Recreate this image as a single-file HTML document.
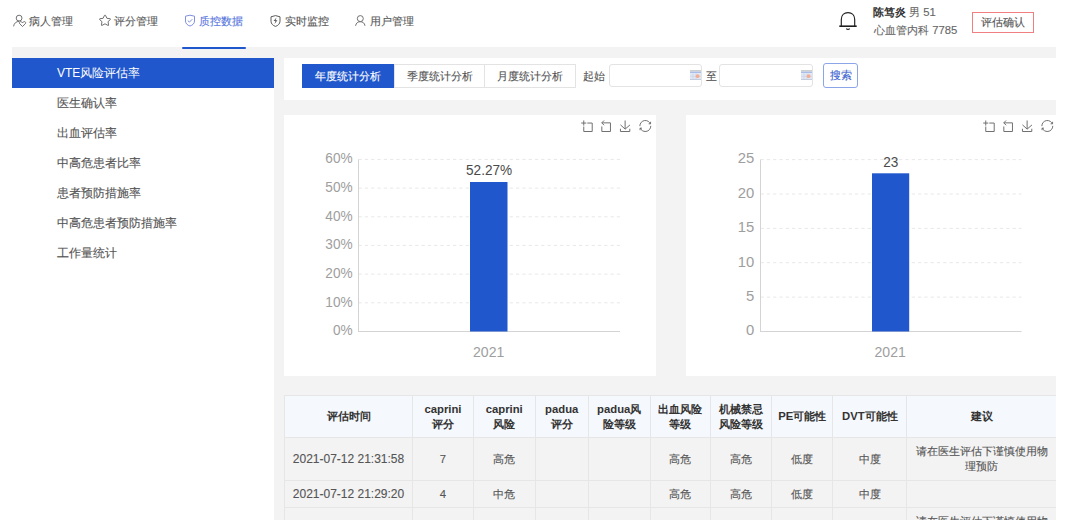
<!DOCTYPE html>
<html><head><meta charset="utf-8">
<style>
*{margin:0;padding:0;box-sizing:border-box}
html,body{width:1080px;height:520px;overflow:hidden;background:#fff}
body{position:relative;font-family:"Liberation Sans",sans-serif;font-size:12px;color:#555;-webkit-text-stroke:0.12px currentColor}
svg text{-webkit-text-stroke:0}
.si.on,th,b{-webkit-text-stroke:0}
.a{position:absolute}
.t{position:absolute;white-space:nowrap;line-height:14px;font-size:11.3px}
.nav{color:#5a5a5a}
.ic{position:absolute;overflow:visible}
#main{position:absolute;left:12px;top:47px;width:1044px;height:473px;background:#f3f3f3;overflow:hidden}
#side{position:absolute;left:0;top:11px;width:262px;height:470px;background:#fff}
.si{position:absolute;left:0;width:262px;height:30px;line-height:30px;padding-left:45px;color:#555;white-space:nowrap}
.si.on{background:#2157cc;color:#fff}
#tool{position:absolute;left:272px;top:11px;width:800px;height:42px;background:#fff}
.tab{position:absolute;font-size:11.3px;top:6px;height:24px;line-height:23px;text-align:center;border:1px solid #e3e3e3;color:#555;background:#fff}
.tab.on{background:#2157cc;color:#fff;border-color:#2157cc}
.inp{position:absolute;top:6px;height:23px;width:93px;border:1px solid #e3e3e3;border-radius:3px;background:#fff}
.panel{position:absolute;top:68px;width:372px;height:261px;background:#fff}
table{position:absolute;left:272px;top:348px;width:772.5px;border-collapse:collapse;table-layout:fixed}
td,th{border:1px solid #e6e6e6;text-align:center;font-size:11.3px}
th{background:#f5f8fc;color:#333;font-weight:bold;height:42px;line-height:15px}
td{color:#555}
</style></head><body>

<!-- header nav -->
<svg class="ic" style="left:12px;top:14px" width="16" height="14" viewBox="0 0 16 14" fill="none" stroke="#707070" stroke-width="1">
  <circle cx="7.1" cy="4.1" r="2.9"/>
  <path d="M1.6 12.4 C2 9.2 4.2 7.4 7.2 7.4"/>
  <path d="M10.5 12.5 L7.9 10 C6.9 9 7.3 7.6 8.6 7.6 C9.5 7.6 10.2 8.2 10.5 8.8 C10.8 8.2 11.5 7.6 12.4 7.6 C13.7 7.6 14.1 9 13.1 10 Z" stroke-linejoin="round"/>
</svg>
<div class="t nav" style="left:28.8px;top:14px">病人管理</div>

<svg class="ic" style="left:98px;top:14px" width="14" height="13" viewBox="0 0 14 13" fill="none" stroke="#707070" stroke-width="1" stroke-linejoin="round">
  <path d="M6.5 1.3 Q7 0.6 7.5 1.3 L8.9 4.3 L12.1 4.7 Q12.9 4.9 12.4 5.5 L10 7.7 L10.6 10.9 Q10.7 11.7 10 11.4 L7 9.8 L4 11.4 Q3.3 11.7 3.4 10.9 L4 7.7 L1.6 5.5 Q1.1 4.9 1.9 4.7 L5.1 4.3 Z"/>
</svg>
<div class="t nav" style="left:114px;top:14px">评分管理</div>

<svg class="ic" style="left:184px;top:14px" width="12" height="13" viewBox="0 0 12 13" fill="none" stroke="#7f90e0" stroke-width="1" stroke-linejoin="round">
  <path d="M1.5 2.2 L6 1.2 L10.5 2.2 V7 C10.5 9.6 8.5 11.3 6 12 C3.5 11.3 1.5 9.6 1.5 7 Z"/>
  <path d="M3.8 6.6 L5.4 8.1 L8.3 5.2"/>
</svg>
<div class="t" style="left:199px;top:14px;color:#5877dd">质控数据</div>
<div class="a" style="left:182px;top:47.3px;width:64px;height:2.2px;border-radius:2px;background:#2157cc;z-index:5"></div>

<svg class="ic" style="left:269px;top:14px" width="13" height="13" viewBox="0 0 13 13" fill="none" stroke="#5a5a5a" stroke-width="1">
  <path d="M2 2.8 Q6.5 0.4 11 2.8 V7.2 C11 9.8 9 11.6 6.5 12.4 C4 11.6 2 9.8 2 7.2 Z" stroke-linejoin="round"/>
  <path d="M7.5 3.4 L4.5 7.1 H6.4 L5.5 10 L8.5 6.2 H6.6 Z" fill="#5a5a5a" stroke="none"/>
</svg>
<div class="t nav" style="left:284.6px;top:14px">实时监控</div>

<svg class="ic" style="left:354px;top:14px" width="13" height="13" viewBox="0 0 13 13" fill="none" stroke="#707070" stroke-width="1">
  <circle cx="6.3" cy="4.6" r="3"/>
  <path d="M1.6 11.8 C2 9 3.9 7.7 6.3 7.7 C8.7 7.7 10.6 9 11 11.8"/>
</svg>
<div class="t nav" style="left:369.8px;top:14px">用户管理</div>

<!-- header right -->
<svg class="ic" style="left:838px;top:11px" width="20" height="20" viewBox="0 0 20 20" fill="none" stroke="#1e1e1e" stroke-width="1.15">
  <path d="M3.3 15 V8.4 C3.3 4.3 6.2 1.7 10 1.7 C13.8 1.7 16.7 4.3 16.7 8.4 V15"/>
  <path d="M1.3 15.2 H18.7" stroke-width="1.6"/>
  <path d="M8.2 17.6 Q10 19.2 11.8 17.6" stroke-width="1.2"/>
</svg>
<div class="t" style="left:873px;top:5px;color:#333"><b>陈笃炎</b> <span style="color:#666">男 51</span></div>
<div class="t" style="left:874px;top:23px;color:#666">心血管内科 7785</div>
<div class="a" style="left:972px;top:11.5px;width:62px;height:21px;border:1px solid #f08080;color:#555;text-align:center;line-height:19px;font-size:11.3px">评估确认</div>

<div id="main">
  <div id="side">
    <div class="si on" style="top:0">VTE风险评估率</div>
    <div class="si" style="top:30px">医生确认率</div>
    <div class="si" style="top:60px">出血评估率</div>
    <div class="si" style="top:90px">中高危患者比率</div>
    <div class="si" style="top:120px">患者预防措施率</div>
    <div class="si" style="top:150px">中高危患者预防措施率</div>
    <div class="si" style="top:180px">工作量统计</div>
  </div>

  <div id="tool">
    <div class="tab on" style="left:18px;width:92px">年度统计分析</div>
    <div class="tab" style="left:110px;width:91px">季度统计分析</div>
    <div class="tab" style="left:200px;width:92px">月度统计分析</div>
    <div class="t" style="left:299px;top:11px">起始</div>
    <div class="inp" style="left:325px"><svg class="a" style="right:0;top:4.8px" width="11" height="10" viewBox="0 0 11 10"><rect x="0" y="0" width="11" height="1.6" fill="#cfcfcf"/><rect x="0" y="1.6" width="11" height="1.6" fill="#a9bde9"/><rect x="0" y="3.2" width="11" height="6.3" fill="#dfe6f4"/><path d="M3 3.2V9.5M6 3.2V9.5M0 6.3H11" stroke="#c9d3e6" stroke-width="0.6"/><rect x="0" y="9" width="11" height="0.8" fill="#b8c4d8"/><circle cx="7.6" cy="6.2" r="1.9" fill="#f3ad92"/></svg></div>
    <div class="t" style="left:422px;top:11px">至</div>
    <div class="inp" style="left:435px;width:94px"><svg class="a" style="right:0;top:4.8px" width="11" height="10" viewBox="0 0 11 10"><rect x="0" y="0" width="11" height="1.6" fill="#cfcfcf"/><rect x="0" y="1.6" width="11" height="1.6" fill="#a9bde9"/><rect x="0" y="3.2" width="11" height="6.3" fill="#dfe6f4"/><path d="M3 3.2V9.5M6 3.2V9.5M0 6.3H11" stroke="#c9d3e6" stroke-width="0.6"/><rect x="0" y="9" width="11" height="0.8" fill="#b8c4d8"/><circle cx="7.6" cy="6.2" r="1.9" fill="#f3ad92"/></svg></div>
    <div class="a" style="left:539px;top:4.5px;width:35px;height:25px;border:1px solid #8aa5e8;border-radius:3px;color:#3a5fcf;text-align:center;line-height:22px;font-size:11.3px">搜索</div>
  </div>

  <div class="panel" style="left:272px"></div>
  <div class="panel" style="left:674px"></div>

  <table>
    <colgroup><col style="width:128.0px"><col style="width:61.0px"><col style="width:61.5px"><col style="width:53.5px"><col style="width:61.5px"><col style="width:60.5px"><col style="width:61.2px"><col style="width:61.0px"><col style="width:74.3px"><col style="width:150px"></colgroup>
    <tr><th>评估时间</th><th>caprini<br>评分</th><th>caprini<br>风险</th><th>padua<br>评分</th><th>padua风<br>险等级</th><th>出血风险<br>等级</th><th>机械禁忌<br>风险等级</th><th>PE可能性</th><th>DVT可能性</th><th>建议</th></tr>
    <tr style="height:43px"><td style="font-size:12px">2021-07-12 21:31:58</td><td>7</td><td>高危</td><td></td><td></td><td>高危</td><td>高危</td><td>低度</td><td>中度</td><td style="line-height:15px">请在医生评估下谨慎使用物<br>理预防</td></tr>
    <tr style="height:27px"><td style="font-size:12px">2021-07-12 21:29:20</td><td>4</td><td>中危</td><td></td><td></td><td>高危</td><td>高危</td><td>低度</td><td>中度</td><td></td></tr>
    <tr style="height:43px"><td></td><td></td><td></td><td></td><td></td><td></td><td></td><td></td><td></td><td style="line-height:15px">请在医生评估下谨慎使用物<br>理预防</td></tr>
  </table>
</div>
<!--CHARTS-->
<svg class="a" style="left:0;top:0;z-index:3" width="1080" height="520" viewBox="0 0 1080 520" font-family="Liberation Sans">
<g fill="none" stroke="#707070" stroke-width="1">
<path vector-effect="non-scaling-stroke" transform="translate(586.70,126.0) scale(0.19) translate(-29,-29)" d="M0,13.5h26.9 M13.5,26.9V0 M32.1,13.5H58V58H13.5 V32.1"/>
<path vector-effect="non-scaling-stroke" transform="translate(606.10,126.0) scale(0.194) translate(-32.4,-29.75)" d="M22,1.4L9.9,13.5l12.3,12.3 M10.3,13.5H54.9v44.6 H10.3v-26"/>
<path vector-effect="non-scaling-stroke" transform="translate(625.20,126.0) scale(0.19) translate(-29.65,-29)" d="M4.7,22.9L29.3,45.5L54.7,23.4M4.6,43.6L4.6,58L53.8,58L53.8,43.6M29.2,45.1L29.2,0"/>
<path vector-effect="non-scaling-stroke" transform="translate(645.30,126.0) scale(0.196) translate(-29.9,-30)" d="M3.8,33.4 M47,18.9h9.8V8.7 M56.3,20.1 C52.1,9,40.5,0.6,26.8,2.1C12.6,3.7,1.6,16.2,2.1,30.6 M13,41.1H3.1v10.2 M3.7,39.9c4.2,11.1,15.8,19.5,29.5,18 c14.2-1.6,25.2-14.1,24.7-28.5"/>
<path vector-effect="non-scaling-stroke" transform="translate(988.70,126.0) scale(0.19) translate(-29,-29)" d="M0,13.5h26.9 M13.5,26.9V0 M32.1,13.5H58V58H13.5 V32.1"/>
<path vector-effect="non-scaling-stroke" transform="translate(1008.10,126.0) scale(0.194) translate(-32.4,-29.75)" d="M22,1.4L9.9,13.5l12.3,12.3 M10.3,13.5H54.9v44.6 H10.3v-26"/>
<path vector-effect="non-scaling-stroke" transform="translate(1027.20,126.0) scale(0.19) translate(-29.65,-29)" d="M4.7,22.9L29.3,45.5L54.7,23.4M4.6,43.6L4.6,58L53.8,58L53.8,43.6M29.2,45.1L29.2,0"/>
<path vector-effect="non-scaling-stroke" transform="translate(1047.30,126.0) scale(0.196) translate(-29.9,-30)" d="M3.8,33.4 M47,18.9h9.8V8.7 M56.3,20.1 C52.1,9,40.5,0.6,26.8,2.1C12.6,3.7,1.6,16.2,2.1,30.6 M13,41.1H3.1v10.2 M3.7,39.9c4.2,11.1,15.8,19.5,29.5,18 c14.2-1.6,25.2-14.1,24.7-28.5"/>
</g>
<g stroke="#e8e8e8" stroke-width="1" stroke-dasharray="3.3 3">
<line x1="358.5" y1="302.8" x2="620" y2="302.8"/>
<line x1="358.5" y1="274.1" x2="620" y2="274.1"/>
<line x1="358.5" y1="245.4" x2="620" y2="245.4"/>
<line x1="358.5" y1="216.8" x2="620" y2="216.8"/>
<line x1="358.5" y1="188.1" x2="620" y2="188.1"/>
<line x1="358.5" y1="159.4" x2="620" y2="159.4"/>
</g>
<line x1="358.5" y1="159.4" x2="358.5" y2="331.5" stroke="#d4d4d4"/>
<line x1="358.0" y1="331.5" x2="620" y2="331.5" stroke="#d4d4d4"/>
<text transform="translate(352.60,335.30) scale(0.89,1)" font-size="15.3" fill="#9e9e9e" text-anchor="end">0%</text>
<text transform="translate(352.60,306.62) scale(0.89,1)" font-size="15.3" fill="#9e9e9e" text-anchor="end">10%</text>
<text transform="translate(352.60,277.93) scale(0.89,1)" font-size="15.3" fill="#9e9e9e" text-anchor="end">20%</text>
<text transform="translate(352.60,249.25) scale(0.89,1)" font-size="15.3" fill="#9e9e9e" text-anchor="end">30%</text>
<text transform="translate(352.60,220.57) scale(0.89,1)" font-size="15.3" fill="#9e9e9e" text-anchor="end">40%</text>
<text transform="translate(352.60,191.88) scale(0.89,1)" font-size="15.3" fill="#9e9e9e" text-anchor="end">50%</text>
<text transform="translate(352.60,163.20) scale(0.89,1)" font-size="15.3" fill="#9e9e9e" text-anchor="end">60%</text>
<rect x="470" y="182" width="37.5" height="149.50" fill="#2157cc"/>
<text transform="translate(489.10,175.20) scale(0.89,1)" font-size="15.3" fill="#4a4a4a" text-anchor="middle">52.27%</text>
<text transform="translate(488.70,356.80) scale(0.92,1)" font-size="15.3" fill="#9e9e9e" text-anchor="middle">2021</text>
<g stroke="#e8e8e8" stroke-width="1" stroke-dasharray="3.3 3">
<line x1="760.5" y1="297.1" x2="1021.5" y2="297.1"/>
<line x1="760.5" y1="262.7" x2="1021.5" y2="262.7"/>
<line x1="760.5" y1="228.4" x2="1021.5" y2="228.4"/>
<line x1="760.5" y1="194.0" x2="1021.5" y2="194.0"/>
<line x1="760.5" y1="159.6" x2="1021.5" y2="159.6"/>
</g>
<line x1="760.5" y1="159.6" x2="760.5" y2="331.5" stroke="#d4d4d4"/>
<line x1="760.0" y1="331.5" x2="1021.5" y2="331.5" stroke="#d4d4d4"/>
<text transform="translate(754.20,335.30) scale(0.97,1)" font-size="15.3" fill="#9e9e9e" text-anchor="end">0</text>
<text transform="translate(754.20,300.92) scale(0.97,1)" font-size="15.3" fill="#9e9e9e" text-anchor="end">5</text>
<text transform="translate(754.20,266.54) scale(0.97,1)" font-size="15.3" fill="#9e9e9e" text-anchor="end">10</text>
<text transform="translate(754.20,232.16) scale(0.97,1)" font-size="15.3" fill="#9e9e9e" text-anchor="end">15</text>
<text transform="translate(754.20,197.78) scale(0.97,1)" font-size="15.3" fill="#9e9e9e" text-anchor="end">20</text>
<text transform="translate(754.20,163.40) scale(0.97,1)" font-size="15.3" fill="#9e9e9e" text-anchor="end">25</text>
<rect x="872" y="173.3" width="37.2" height="158.20" fill="#2157cc"/>
<text transform="translate(890.80,166.80) scale(0.89,1)" font-size="15.3" fill="#4a4a4a" text-anchor="middle">23</text>
<text transform="translate(890.20,356.80) scale(0.92,1)" font-size="15.3" fill="#9e9e9e" text-anchor="middle">2021</text>
</svg>
<!--/CHARTS-->
</body></html>
